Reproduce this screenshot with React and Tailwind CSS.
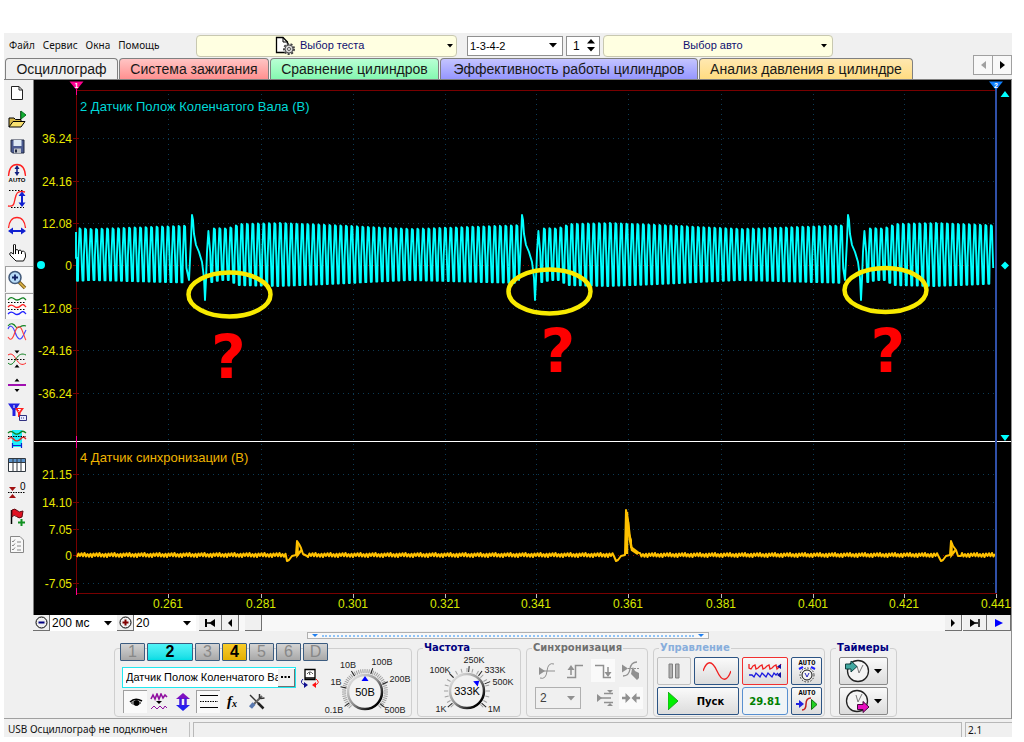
import React, { useState } from 'react';
import clsx from 'clsx';

const TABS = [
  { label: 'Осциллограф', cls: 'w-[113px] bg-[#f0f0f0] border-b-transparent' },
  { label: 'Система зажигания', cls: 'w-[150px] bg-linear-to-b from-[#ffc4c4] to-[#ff9090]' },
  { label: 'Сравнение цилиндров', cls: 'w-[169px] bg-linear-to-b from-[#b8ffd4] to-[#84f8b0]' },
  { label: 'Эффективность работы цилиндров', cls: 'w-[258px] bg-linear-to-b from-[#c4c4ff] to-[#9696ff]' },
  { label: 'Анализ давления в цилиндре', cls: 'w-[214px] bg-linear-to-b from-[#ffe8b0] to-[#ffdc80]' },
];

const CHANNELS = [
  { id: '1' },
  { id: '2', cls: 'w-[46px] bg-linear-to-b from-[#50f4f8] to-[#00dce4] text-black font-bold' },
  { id: '3' },
  { id: '4', cls: 'w-[25px] bg-linear-to-b from-[#f8cc28] to-[#e4b000] text-black font-bold' },
  { id: '5' },
  { id: '6' },
  { id: 'D' },
];

/* ---------- signals ---------- */

const GAPS = [192, 522, 848];
const GRID_X = [168, 261, 353, 445, 536, 628, 721, 813, 904, 996];
const TIMES = ['0.261', '0.281', '0.301', '0.321', '0.341', '0.361', '0.381', '0.401', '0.421', '0.441'];
const CH2_SCALE = [['36.24', 138], ['24.16', 181], ['12.08', 223], ['0', 265], ['-12.08', 308], ['-24.16', 350], ['-36.24', 393]];
const CH4_SCALE = [['21.15', 474], ['14.10', 502], ['7.05', 529], ['0', 555], ['-7.05', 583]];
const MARKS = [[229.5, 294.5, 228.5, 378], [549.5, 291.5, 558, 372], [885.5, 290, 888, 372]];

// [distance from the missing teeth, top, bottom]
const ENVELOPE = [[0, 231, 282], [5, 227, 282], [11, 229, 280], [22, 227, 280], [28, 224, 285], [70, 223, 286], [120, 225, 284], [200, 229, 280], [312, 225, 283]];

const envelope = u => {
  const i = Math.max(1, ENVELOPE.findIndex(p => p[0] >= u));
  const a = ENVELOPE[i - 1];
  const b = ENVELOPE[i];
  const k = Math.min(1, (u - a[0]) / (b[0] - a[0]));
  return [a[1] + (b[1] - a[1]) * k, a[2] + (b[2] - a[2]) * k];
};

const crankPath = () => {
  const pts = [[76, 232], [76, 258], [77, 258]];
  let x = 77;
  let last = -125;
  [...GAPS, 2000].forEach(gap => {
    while (x + 5.5 < gap - 1 && x < 992) {
      const [top, bottom] = envelope(Math.min(311, Math.max(0, x - last - 16)));
      pts.push([x, bottom], [x + 1, bottom], [x + 1.4, 256], [x + 2.6, top], [x + 3.6, top + 1], [x + 4.2, 248], [x + 4.9, 268]);
      x += 5.5;
    }
    if (gap < 2000) {
      pts.push([gap - 3, 280], [gap - 1, 240], [gap, 215], [gap + 1, 220], [gap + 2, 234], [gap + 4, 245], [gap + 7, 252],
        [gap + 10, 262], [gap + 12, 278], [gap + 13, 300], [gap + 14, 280], [gap + 15, 252]);
      last = gap;
      x = gap + 13.8;
      pts.push([x + 2.6, 231], [x + 4.4, 252]);
      x += 5.5;
    }
  });
  return pts.map(p => p.join(',')).join(' ');
};

const PULSES = [
  [287, [[287, 561], [289, 560], [292, 556], [296, 555], [297, 541], [299, 544], [301, 548], [303, 554], [307, 556]]],
  [616, [[616, 561], [618, 560], [621, 556], [625, 555], [626, 510], [628, 520], [629, 534], [631, 540], [631, 547], [635, 550], [639, 553]]],
  [941, [[941, 561], [943, 560], [946, 556], [950, 555], [951, 541], [953, 546], [956, 550], [958, 556], [961, 556]]],
];

const syncPath = () => {
  const pts = [];
  let x = 77;
  let n = 0;
  while (x < 996) {
    const pulse = PULSES.find(p => x >= p[0] - 1 && x < p[0] + 5);
    if (pulse) {
      pts.push(...pulse[1]);
      x = pulse[1][pulse[1].length - 1][0] + 1;
    }
    const d = ((n * 7) % 5) / 4;
    pts.push([x, n % 2 ? 553 + d : 557 - d]);
    x += 1.5;
    n += 1;
  }
  return pts.map(p => p.join(',')).join(' ');
};

function Scope() {
  return (
    <svg viewBox="34 80 977 535" className="block h-auto w-full bg-black font-['Liberation_Sans',Arial,sans-serif] text-[12px]" role="img" aria-label="Осциллограмма">
      <g stroke="#0c3a54" strokeWidth="1" strokeDasharray="1 4">
        {GRID_X.map(x => <line key={x} x1={x + 0.5} x2={x + 0.5} y1="94" y2="593" />)}
        {[...CH2_SCALE, ...CH4_SCALE].map(([t, y]) => (
          <line key={t + y} x1="78" x2="996" y1={y + 0.5} y2={y + 0.5} stroke={t === '0' ? '#8c0000' : '#0c3a54'} />
        ))}
      </g>
      <g stroke="#780000" strokeWidth="1">
        <path d="M76 90.5H997M76 593.5H997M76.5 90V594" fill="none" />
        {[...CH2_SCALE, ...CH4_SCALE].map(([t, y]) => <line key={t + y} x1="73" x2="79" y1={y + 0.5} y2={y + 0.5} />)}
      </g>
      {GRID_X.map(x => <path key={x} d={`M${x + 0.5} 594v4`} stroke="#c0c0c0" />)}
      <path d="M34 441.5H1011" stroke="#fff" />

      <polyline points={crankPath()} fill="none" stroke="#00ffff" strokeWidth="1.9" strokeLinejoin="round" />
      <polyline points={syncPath()} fill="none" stroke="#ffc000" strokeWidth="2" strokeLinejoin="round" />
      <path d="M627 512v42M628 522l2 18 2 10 6 4M297.500 543v12l4 -5M951.500 543v12l4 -5" fill="none" stroke="#ffc000" strokeWidth="2.500" />

      <path d="M996 84V593" stroke="#3050a8" strokeWidth="2" />
      <path d="M76.500 84V95M76.500 436V448M76.500 588V595" stroke="#ff0090" />
      <path d="M69.500 81.500H83.500L76.500 90Z" fill="#ff0090" />
      <path d="M989 81.500H1003L996 90Z" fill="#1080ff" />
      <text x="76.5" y="88" fontSize="7" fontWeight="bold" textAnchor="middle" fill="#fff">1</text>
      <text x="996" y="88" fontSize="7" fontWeight="bold" textAnchor="middle" fill="#fff">2</text>
      <g fill="#00ffff">
        <path d="M1000.500 97L1005 91L1009.500 97ZM1000.500 435H1009.500L1005 441ZM1001 265.500L1005 261.500L1009 265.500L1005 269.500Z" />
        <circle cx="41" cy="265" r="4" />
      </g>

      <text x="80" y="111" fontSize="13" fill="#00d8d8">2 Датчик Полож Коленчатого Вала (В)</text>
      <text x="80" y="462" fontSize="13" fill="#f0b400">4 Датчик синхронизации (В)</text>
      <g fill="#e8e800" textAnchor="end">
        {[...CH2_SCALE, ...CH4_SCALE].map(([t, y]) => <text key={t + y} x="72" y={y + 5}>{t}</text>)}
      </g>
      <g fill="#d8e800" textAnchor="middle">
        {TIMES.map((t, i) => <text key={t} x={GRID_X[i]} y="608">{t}</text>)}
      </g>

      {MARKS.map(([cx, cy, tx, ty]) => (
        <g key={cx}>
          <ellipse cx={cx} cy={cy} rx="41" ry="22" fill="none" stroke="#f8ea00" strokeWidth="4.5" />
          <text x={tx} y={ty} fontFamily="DejaVu Sans" fontWeight="bold" fontSize="60" textAnchor="middle" fill="#ff0000">?</text>
        </g>
      ))}
    </svg>
  );
}

/* ---------- icons ---------- */

function Icon({ w = 20, h = 20, children }) {
  return (
    <svg width={w} height={h} viewBox={`0 0 ${w} ${h}`} fill="none" stroke="#000" className="shrink-0" aria-hidden="true">
      {children}
    </svg>
  );
}

const Down = ({ color = '#000' }) => (
  <Icon w={8} h={5}><path d="M0 0H8L4 4.500Z" fill={color} stroke="none" /></Icon>
);

const TOOLS = [
  ['Новый', <Icon><path d="M4.500 3.500H12L15.500 7V16.500H4.500Z" fill="#fff" stroke="#222" /><path d="M12 3.500V7H15.500" stroke="#222" /></Icon>],
  ['Открыть', <Icon><path d="M2 17V8H7L8.500 9.500H14V12" fill="#d8b848" /><path d="M2 17L6 11.500H18L14 17Z" fill="#f8e070" /><path d="M13.500 9V1" stroke="#444" /><path d="M14 1L19 5L14 9Z" fill="#10b030" stroke="#087020" /></Icon>],
  ['Сохранить', <Icon><path d="M4 4H17V17H5.500L4 15.500Z" fill="#4a5a90" stroke="#202840" /><path d="M6.500 4H14.500V10H6.500Z" fill="#dce8f4" stroke="none" /><path d="M7 12.500H14V17H7Z" fill="#c0c4c8" stroke="none" /><path d="M8 13.500H10V16.500H8Z" fill="#202840" stroke="none" /></Icon>],
  ['Авто', <Icon><path d="M1.500 13C2 6 5 1.500 10 1.500S18 6 18.500 13" stroke="#ff2020" strokeWidth="1.3" /><path d="M10 4V11" stroke="#102080" strokeWidth="1.500" /><path d="M10 2L12.500 6H7.500ZM10 13L12.500 9H7.500Z" fill="#102080" stroke="none" /><text x="10" y="19" textAnchor="middle" fontSize="6" fontWeight="bold" fill="#000" stroke="none">AUTO</text></Icon>],
  ['Амплитуда', <Icon><path d="M2 1.500H17M4 18.500H17" strokeDasharray="1.500 1.500" /><path d="M1 17C7 18 7 15 8 10S10 1 18 3" stroke="#ff2020" strokeWidth="1.300" /><path d="M15 6V15" stroke="#1020d0" strokeWidth="2" /><path d="M15 2.500L18.500 7H11.500ZM15 18L18.500 13.500H11.500Z" fill="#1020d0" stroke="none" /></Icon>],
  ['Период', <Icon><path d="M1.500 12C2 6 5 1.500 10 1.500S18 6 18.500 12" stroke="#ff2020" strokeWidth="1.300" /><path d="M5 15H15" stroke="#1020d0" strokeWidth="2" /><path d="M1 15L6 11.500V18.500ZM19 15L14 11.500V18.500Z" fill="#1020d0" stroke="none" /></Icon>],
  ['Рука', <Icon><path d="M6.500 12V3Q7.500 1 8.500 3V8L10 7.500L11.500 8.500L13.500 8L14.500 9.500L16.500 9Q18.500 10 18.500 13V15L16.500 19H9L3 13Q2 11 4 10.500Z" fill="#fff" stroke="#111" /><path d="M11.500 8.500V12M14.500 9.500V12M8.500 8V12" /></Icon>],
  ['Масштаб', <Icon><path d="M12 12L18 18" stroke="#806020" strokeWidth="3.500" /><path d="M12.500 12.500L18 18" stroke="#e0b848" strokeWidth="1.500" /><circle cx="8" cy="7.500" r="6" fill="#b8dcf8" stroke="#405878" strokeWidth="1.500" /><path d="M5 7.500H11M8 4.500V10.500" stroke="#102060" strokeWidth="1.800" /></Icon>],
  ['Раздельно', <Icon><path d="M1 4C3 1 5 1 7.500 3S12 4 14 2.500S17 2 19 4" stroke="#108020" strokeWidth="1.300" /><path d="M1 11C3 8.500 5 8.500 7.500 10.500S12 11.500 14 9.500S17 9 19 11" stroke="#ff2020" strokeWidth="1.300" /><path d="M1 18C3 15.500 5 15.500 7.500 17.500S12 18.500 14 16.500S17 16 19 18" stroke="#2020ff" strokeWidth="1.300" /><path d="M1 6.500H19M1 13.500H19" strokeDasharray="1.500 1.500" /></Icon>],
  ['Вместе', <Icon><path d="M1 4C4 0 7 2 9 5S14 2 19 4" stroke="#108020" strokeWidth="1.100" /><path d="M1 7C3 2 6 4 8 10S13 20 16 14L19 8" stroke="#4040ff" strokeWidth="1.100" /><path d="M1 15C4 20 6 16 8 10S13 3 15 8S18 17 19 18" stroke="#ff4040" strokeWidth="1.100" /></Icon>],
  ['Центр', <Icon><path d="M1 6C4 4 6 5 9 10S15 17 19 14" stroke="#ff2020" /><path d="M1 14C4 17 6 15 9 10S15 4 19 6" stroke="#108020" /><path d="M1 10.500H19" strokeDasharray="1.500 1.500" /><path d="M7.500 1.500H12.500L10 4.500ZM7.500 18.500H12.500L10 15.500Z" fill="#000" stroke="none" /></Icon>],
  ['Сдвиг', <Icon><path d="M1 10H19" stroke="#a010b0" strokeWidth="2" /><path d="M7.500 6.500H12.500L10 3.500ZM7.500 14H12.500L10 17Z" fill="#000" stroke="none" /></Icon>],
  ['Маркеры', <Icon><path d="M1 1.500H13L8.500 8V14H5.500V8Z" fill="#2020e0" stroke="none" /><path d="M8 6H17L13.500 11V15H11V11Z" fill="#ff2020" stroke="none" /><path d="M7 3V6" stroke="#fff" /><path d="M11 7.500H13.500L11.500 10" stroke="#fff" /><path d="M12.500 13.500H19.500V18.500H12.500Z" fill="#e8ecff" stroke="#303080" /><path d="M14 16H18" stroke="#303080" strokeDasharray="1 1" /></Icon>],
  ['Выделение', <Icon><path d="M5 1H15V18H5Z" fill="#20f0f8" stroke="none" /><path d="M1 4C3 2 5 2 7 4S12 5 14 3S18 3 19 4" stroke="#108020" strokeWidth="1.300" /><path d="M1 7.500H19" strokeDasharray="1.500 1" /><path d="M1 10C3 8 5 8 7 10.500S12 12 14 9.500S18 9 19 10" stroke="#e02020" strokeWidth="1.300" /><path d="M6 16.500H14M5.500 14V19M14.500 14V19" stroke="#1020d0" strokeWidth="1.200" /></Icon>],
  ['Таблица', <Icon><path d="M1.500 3.500H18.500V16.500H1.500Z" fill="#fff" stroke="#303840" /><path d="M2 4H18V7H2Z" fill="#5890c8" stroke="none" /><path d="M1.500 7.500H18.500M6 4V16M10 4V16M14 4V16" stroke="#303840" /></Icon>],
  ['Ноль', <Icon><path d="M1 10.500H18" strokeDasharray="1.500 1" /><path d="M2 5H9L5.500 9ZM2 16H9L5.500 12Z" fill="#a01010" stroke="none" /><text x="13" y="8" fontSize="10" fill="#000" stroke="none">0</text></Icon>],
  ['Флаг', <Icon><path d="M4.500 2V16" strokeWidth="1.500" /><path d="M5 2Q8 0 10 2.500T16 3L15 9Q12 11 9.500 8.500T5 9Z" fill="#e01020" stroke="#600810" /><path d="M14.500 11V18M11 14.500H18" stroke="#109020" strokeWidth="2" /></Icon>],
  ['Отчёт', <Icon><path d="M3.500 1.500H13L16.500 5V17.500H3.500Z" fill="#f8f8f8" stroke="#888" /><path d="M5 6L6 7L8 4.500M5 10L6 11L8 8.500M5 14L6 15L8 12.500M10 7H14M10 11H14M10 15H14" stroke="#888" /></Icon>],
];

function Toolbar() {
  return (
    <div className="flex w-[30px] shrink-0 flex-col border-r border-[#808080]">
      <div className="flex h-[478px] flex-col items-center justify-between" role="toolbar">
        {TOOLS.map(([name, icon], i) => (
          <button
            key={name}
            aria-label={name}
            className={clsx('flex h-[26px] w-7 items-center justify-center pr-1', (i === 7 || i === 8) && 'border-t border-l border-[#a0a0a0] bg-[#fafafa]')}
          >
            {icon}
          </button>
        ))}
      </div>
    </div>
  );
}

/* ---------- header ---------- */

function Header() {
  const [order, setOrder] = useState('1-3-4-2');
  return (
    <header className="flex h-[25px] items-center text-[11px]">
      <nav className="flex w-[192px] shrink-0 gap-2 pl-[5px] font-['Noto_Sans',sans-serif] text-[10px] text-[#111]">
        <a href="#file">Файл</a>
        <a href="#service">Сервис</a>
        <a href="#windows">Окна</a>
        <a href="#help">Помощь</a>
      </nav>
      <button className="flex h-[22px] w-[261px] items-center rounded-[4px] border border-[#c8c8b0] bg-[#ffffe1] pr-[3px] pl-[78px] text-[#101070]">
        <Icon w={21}>
          <path d="M1.500 1.500H8L12.500 6V16.500H1.500Z" fill="#fff" strokeWidth="1.300" />
          <path d="M8 1.500V6H12.500" />
          <circle cx="14" cy="13" r="5" fill="#d0d0d0" stroke="#444" strokeWidth="2" strokeDasharray="2 1.500" />
          <circle cx="14" cy="13" r="4" fill="#d8d8d8" stroke="#555" />
          <circle cx="14" cy="13" r="1.500" fill="#fff" stroke="#555" />
        </Icon>
        <span className="ml-1 flex-1 text-left text-[11px]">Выбор теста</span>
        <Icon w={6} h={4}><path d="M0 0H6L3 3.500Z" fill="#000" stroke="none" /></Icon>
      </button>
      <label className="ml-[10px] flex h-5 w-24 items-center border border-[#909090] bg-white pr-[5px] pl-[2px]">
        <select value={order} onChange={e => setOrder(e.target.value)} aria-label="Порядок работы цилиндров" className="min-w-0 flex-1 appearance-none text-[11px] leading-4">
          <option>1-3-4-2</option>
          <option>1-2-4-3</option>
        </select>
        <Down />
      </label>
      <div className="ml-[3px] flex h-5 w-[34px] items-center border border-[#909090] bg-white pr-1">
        <input aria-label="Цилиндр" defaultValue="1" className="w-5 min-w-0 pl-[6px] text-[12px] leading-4" />
        <div className="flex flex-col gap-[3px]">
          <button aria-label="Больше" className="block"><Icon w={8} h={5}><path d="M0 4.500H8L4 0Z" fill="#000" stroke="none" /></Icon></button>
          <button aria-label="Меньше" className="block"><Down /></button>
        </div>
      </div>
      <button className="ml-[3px] flex h-[22px] w-[230px] items-center rounded-[4px] border border-[#c8c8b0] bg-[#ffffe1] pr-[5px] pl-[79px] text-[#101070]">
        <span className="flex-1 text-left text-[11px]">Выбор авто</span>
        <Icon w={6} h={4}><path d="M0 0H6L3 3.500Z" fill="#000" stroke="none" /></Icon>
      </button>
    </header>
  );
}

function Tabs() {
  return (
    <div className="flex h-[22px] items-end border-b border-[#808080] pl-[1px] text-[14px] text-[#181818]">
      {TABS.map(t => (
        <button key={t.label} className={clsx('mr-[1px] h-[21px] shrink-0 rounded-t-[4px] border border-b-0 border-[#808080] leading-5 whitespace-nowrap', t.cls)}>
          {t.label}
        </button>
      ))}
      <div className="mb-1 ml-auto flex h-5 border border-[#a0a0a0]">
        <button aria-label="Назад" className="flex w-[19px] items-center justify-center border-r border-[#a0a0a0] bg-[#f8f8f8]">
          <Icon w={5} h={8}><path d="M5 0V8L0 4Z" fill="#a0a0a0" stroke="none" /></Icon>
        </button>
        <button aria-label="Вперёд" className="flex w-[18px] items-center justify-center bg-[#f8f8f8]">
          <Icon w={5} h={8}><path d="M0 0V8L5 4Z" fill="#000" stroke="none" /></Icon>
        </button>
      </div>
    </div>
  );
}

/* ---------- time scale and scrolling ---------- */

function ScrollButton({ label, w = 'w-[17px]', children }) {
  return (
    <button aria-label={label} className={clsx('flex h-4 shrink-0 items-center justify-center border-r border-b border-[#707070] bg-[#f0f0f0]', w)}>
      {children}
    </button>
  );
}

function ScrollRow() {
  return (
    <div className="flex h-4 items-center bg-[#f8f8f8] text-[12px]">
      <div className="h-4 w-[29px] shrink-0 bg-[#f0f0f0]" />
      <ScrollButton label="Сжать"><Icon w={13} h={13}><circle cx="6.500" cy="6.500" r="5.500" /><path d="M3.500 6.500H9.500" stroke="#000080" strokeWidth="2" /></Icon></ScrollButton>
      <label className="flex h-4 w-[67px] shrink-0 items-center bg-white pr-[5px] pl-[2px]">
        <select aria-label="Развёртка" className="min-w-0 flex-1 appearance-none leading-4"><option>200 мс</option></select>
        <Down />
      </label>
      <ScrollButton label="Растянуть"><Icon w={13} h={13}><circle cx="6.500" cy="6.500" r="5.500" /><path d="M3.500 6.500H9.500M6.500 3.500V9.500" stroke="#800000" strokeWidth="2" /></Icon></ScrollButton>
      <label className="flex h-4 w-[62px] shrink-0 items-center bg-white pr-[5px] pl-[2px]">
        <select aria-label="Масштаб" className="min-w-0 flex-1 appearance-none leading-4"><option>20</option></select>
        <Down />
      </label>
      <div className="w-[3px] shrink-0" />
      <ScrollButton label="В начало" w="w-[23px]"><Icon w={11} h={8}><path d="M1 0V8" strokeWidth="2" /><path d="M2 4H5" strokeWidth="1.500" /><path d="M10 0V8L4 4Z" fill="#000" stroke="none" /></Icon></ScrollButton>
      <ScrollButton label="Влево"><Icon w={4} h={8}><path d="M4 0V8L0 4Z" fill="#000" stroke="none" /></Icon></ScrollButton>
      <div className="flex flex-1 pl-[6px]">
        <ScrollButton label="Позиция" />
      </div>
      <ScrollButton label="Вправо"><Icon w={4} h={8}><path d="M0 0V8L4 4Z" fill="#000" stroke="none" /></Icon></ScrollButton>
      <ScrollButton label="В конец" w="ml-[1px] w-6"><Icon w={11} h={8}><path d="M1 0V8L7 4Z" fill="#000" stroke="none" /><path d="M10 0V8" strokeWidth="1.500" /><path d="M6 4H9" strokeWidth="1.500" /></Icon></ScrollButton>
      <ScrollButton label="Воспроизвести" w="w-6"><Icon w={8} h={8}><path d="M0 0V8L8 4Z" fill="#0000ff" stroke="none" /></Icon></ScrollButton>
    </div>
  );
}

/* ---------- control panel ---------- */

function Knob({ w, h, cx, cy, value, labels, angle, ticks }) {
  const step = 270 / ticks;
  return (
    <svg width={w} height={h} viewBox={`0 0 ${w} ${h}`} className="shrink-0 text-[9px]" role="img" aria-label={value}>
      <defs>
        <linearGradient id={`rim${ticks}`} x1="0" y1="0" x2="1" y2="1">
          <stop offset="0" stopColor="#f4f4f4" />
          <stop offset="0.5" stopColor="#909090" />
          <stop offset="0.85" stopColor="#000" />
        </linearGradient>
      </defs>
      <g stroke="#a0a0a0">
        {Array.from({ length: ticks + 1 }, (_, i) => (
          <path key={i} d={`M${cx} ${cy - 19}v-4`} transform={`rotate(${-135 + i * step} ${cx} ${cy})`} />
        ))}
      </g>
      {labels.map(([t, x, y, a]) => (
        <g key={t}>
          <path d={`M${cx} ${cy - 19}v-6`} stroke="#222" transform={`rotate(${a} ${cx} ${cy})`} />
          <text x={x} y={y} textAnchor="middle" fill="#222">{t}</text>
        </g>
      ))}
      <circle cx={cx} cy={cy} r="17" fill="#f2f2f2" stroke={`url(#rim${ticks})`} strokeWidth="2.500" />
      <path d={`M${cx - 3.5} ${cy - 11}h7l-3.500 -5z`} fill="#0000ff" transform={`rotate(${angle} ${cx} ${cy})`} />
      <text x={cx} y={cy + 4} textAnchor="middle" fontSize="11" fill="#000">{value}</text>
    </svg>
  );
}

function Group({ title, color, className, children }) {
  return (
    <fieldset className={clsx('h-[75px] min-w-0 shrink-0 rounded-[4px] border border-[#cfcfcf]', className)}>
      <legend className={clsx("ml-[5px] px-[1px] font-['DejaVu_Sans',sans-serif] text-[10px] leading-3 font-bold whitespace-nowrap", color)}>{title}</legend>
      {children}
    </fieldset>
  );
}

function ChannelGroup() {
  const [name, setName] = useState('Датчик Полож Коленчатого Вала');
  return (
    <div className="mt-[6px] flex h-[69px] w-[298px] shrink-0 rounded-[4px] border border-[#cfcfcf] pl-[5px]">
      <div className="-mt-[6px] w-[202px] shrink-0">
        <div className="flex w-max gap-[2px]">
          {CHANNELS.map(c => (
            <button key={c.id} className={clsx('h-[18px] rounded-[1px] border border-[#3c5c80] text-[16px] leading-4', c.cls || 'w-[25px] bg-linear-to-b from-[#d4d4d4] to-[#a8a8a8] text-[#888]')}>
              {c.id}
            </button>
          ))}
        </div>
        <div className="mt-[6px] ml-[2px] flex h-[21px] items-center">
          <div className="flex h-[21px] w-[174px] items-center border border-[#20e8f0] bg-white">
            <input aria-label="Название канала" value={name} onChange={e => setName(e.target.value)} className="min-w-0 flex-1 pl-[3px] text-[11px]" />
            <button aria-label="Выбрать датчик" className="flex h-[18px] w-[17px] items-center justify-center border-r border-b border-[#707070] bg-[#f0f0f0]">
              <Icon w={10} h={2}><path d="M0 1H10" strokeWidth="2" strokeDasharray="2 1.500" /></Icon>
            </button>
          </div>
          <button aria-label="Инвертировать" className="ml-1">
            <Icon><path d="M5 1.500H15V11.500H5Z" fill="#fff" strokeWidth="1.300" /><path d="M7 6Q10 2 13 6M10 7L9 4" stroke="#555" /><path d="M5 10H15" strokeWidth="1.500" /><path d="M3 11Q-1 15 5 17" stroke="#101090" /><path d="M4 14L8 17L4 20Z" fill="#101090" stroke="none" /><path d="M16 11Q21 15 15 17" stroke="#ff1010" /><path d="M16 14L12 17L16 20Z" fill="#ff1010" stroke="none" /></Icon>
          </button>
        </div>
        <div className="mt-[2px] ml-[3px] flex">
          <button aria-label="Показать" className="flex h-[23px] w-6 items-center justify-center border-t border-l border-[#a0a0a0] bg-[#fafafa]">
            <Icon w={14} h={12}><path d="M1 6Q6 1 13 5" strokeWidth="1.500" /><path d="M2 7Q7 3 12 7Q7 11 2 7Z" fill="#999" stroke="#666" /><circle cx="7.500" cy="7" r="2.500" fill="#000" /></Icon>
          </button>
          <button aria-label="Фильтр" className="flex h-[23px] w-6 items-center justify-center">
            <Icon w={18} h={18}><path d="M1 6L3 2L5 6L7 1L9 6L11 1L13 5L15 2L17 4" stroke="#9010a0" strokeWidth="1.600" /><path d="M6 8H12L9 11Z" fill="#000" stroke="none" /><path d="M1 16L4 13L7 16L10 13L13 16L15 13L17 15" stroke="#9010a0" /></Icon>
          </button>
          <button aria-label="Сдвинуть" className="flex h-[23px] w-6 items-center justify-center">
            <Icon w={16} h={18}><path d="M8 0L15 6H1Z" fill="#8010c0" stroke="none" /><path d="M8 18L15 12H1Z" fill="#2020f0" stroke="none" /><path d="M5.500 5V13M10.500 5V13" stroke="#4018e0" strokeWidth="2.500" /></Icon>
          </button>
          <button aria-label="Уровни" className="ml-[1px] flex h-[23px] w-6 items-center justify-center border-t border-l border-[#a0a0a0] bg-[#fafafa]">
            <Icon w={18} h={16}><path d="M0 1.500H18M0 13.500H18" /><path d="M0 7.500H18" strokeDasharray="1.500 1" /></Icon>
          </button>
          <button aria-label="Функция" className="flex h-[23px] w-6 items-center justify-center font-['Liberation_Serif',serif] text-[15px] leading-none font-bold italic">
            f<span className="mt-1 text-[10px]">x</span>
          </button>
          <button aria-label="Настройки" className="flex h-[23px] w-6 items-center justify-center">
            <Icon w={17} h={17}><path d="M2 2L14 14" stroke="#333" strokeWidth="1.500" /><path d="M10 10L15.500 15.500" stroke="#222" strokeWidth="2.500" /><path d="M14 3L5 12" stroke="#666" strokeWidth="2" /><path d="M6 10.500L2.500 14.500" stroke="#5878b0" strokeWidth="4" /><path d="M11.500 1V4.500L13 5.500L16.500 5" stroke="#333" strokeWidth="1.500" /></Icon>
          </button>
        </div>
      </div>
      <div className="pt-[7px]">
        <Knob w={89} h={60} cx={43} cy={36} value="50В" ticks={48} angle={0}
          labels={[['0.1В', 12, 57, -125], ['1В', 14, 29, -78], ['10В', 26, 12, -33], ['100В', 60, 9, 18], ['200В', 78, 26, 66], ['500В', 73, 57, 128]]} />
      </div>
    </div>
  );
}

const PUSH = 'flex items-center justify-center rounded-[2px] border border-[#2c5484] bg-linear-to-b from-[#fafafa] to-[#dcdcdc]';

function SyncGroup() {
  return (
    <Group title="Синхронизация" color="text-[#707070]" className="w-[122px]">
      <div className="flex flex-col gap-[5px] pt-[5px] pl-2">
        <div className="flex gap-1">
          <button disabled aria-label="Уровень" className="flex h-[23px] w-6 items-center justify-center"><Icon w={18} h={18}><path d="M1 9H17M2 16Q8 18 9 9T16 2" stroke="#909090" /><path d="M1 5V13L7 9Z" fill="#909090" stroke="none" /></Icon></button>
          <button disabled aria-label="Фронт" className="flex h-[23px] w-6 items-center justify-center"><Icon w={18} h={18}><path d="M1 15.500H9.500V3.500H17M5 6V13" stroke="#909090" strokeWidth="1.500" /><path d="M1.500 8H8.500L5 3Z" fill="#909090" stroke="none" /></Icon></button>
          <button disabled aria-label="Спад" className="flex h-[23px] w-6 items-center justify-center bg-[#fafafa]"><Icon w={18} h={18}><path d="M1 3.500H9.500V15.500H17M14 5V11" stroke="#909090" strokeWidth="1.500" /><path d="M10.500 10H17.500L14 15Z" fill="#909090" stroke="none" /></Icon></button>
          <button disabled aria-label="Вручную" className="flex h-[23px] w-6 items-center justify-center"><Icon w={20}><path d="M1 7.500H19" stroke="#909090" strokeDasharray="2 1" /><path d="M2 15Q8 15 9 8T16 1" stroke="#909090" strokeWidth="1.300" /><path d="M1 3.500V11.500L7 7.500ZM11 8L12 6L14 10L18 12V17L16 19L10 13Z" fill="#909090" stroke="none" /></Icon></button>
        </div>
        <div className="flex items-center">
          <label className="flex h-[22px] w-[46px] items-center border border-[#b0b0b0] pr-[5px] pl-1">
            <select disabled aria-label="Канал синхронизации" className="min-w-0 flex-1 appearance-none text-[12px] text-[#404040] opacity-100"><option>2</option></select>
            <Down color="#909090" />
          </label>
          <button disabled aria-label="Окно" className="ml-3 flex h-[22px] w-6 items-center justify-center"><Icon w={18} h={16}><path d="M1 8H15M8 3.500H17M8 12.500H17" stroke="#909090" strokeWidth="1.500" /><path d="M1 4V12L6 8ZM11 0H17L14 3ZM11 16H17L14 13Z" fill="#909090" stroke="none" /></Icon></button>
          <button disabled aria-label="Сжать" className="ml-[2px] flex h-[22px] w-6 items-center justify-center bg-[#fafafa]"><Icon w={18} h={10}><path d="M0 5H5M18 5H13" stroke="#909090" strokeWidth="2.500" /><path d="M3.500 0V10L8.500 5ZM14.500 0V10L9.500 5Z" fill="#909090" stroke="none" /></Icon></button>
        </div>
      </div>
    </Group>
  );
}

const AutoText = () => <text x="12" y="7" textAnchor="middle" fontSize="7" fontWeight="bold" fontFamily="Liberation Mono" fill="#000" stroke="none">AUTO</text>;

function ControlGroup() {
  return (
    <Group title="Управление" color="text-[#88aedc]" className="w-[172px]">
      <div className="flex gap-[3px] pt-[3px] pl-[3px]">
        <div className="flex w-[82px] flex-col gap-[2px]">
          <div className="flex gap-[3px]">
            <button disabled aria-label="Пауза" className="flex h-7 w-[34px] items-center justify-center rounded-[2px] border border-[#c0c0c0]"><Icon w={12} h={16}><path d="M1 1H4.500V15H1ZM7.500 1H11V15H7.500Z" fill="#b0b0b0" stroke="#808080" /></Icon></button>
            <button aria-label="Синусоида" className={clsx(PUSH, 'h-7 w-[45px]')}><Icon w={28}><path d="M0 10C4 -1 9 -1 14 10S24 21 28 10" stroke="#f02020" strokeWidth="1.300" /></Icon></button>
          </div>
          <button className={clsx(PUSH, 'h-7 gap-[19px] pr-1 font-[\'DejaVu_Sans\',sans-serif] text-[10px] font-bold')}>
            <Icon w={10} h={18}><path d="M0 0V18L10 9Z" fill="#00f000" stroke="#20a020" /></Icon>
            Пуск
          </button>
        </div>
        <div className="flex w-[46px] flex-col gap-[2px]">
          <button aria-label="Сигналы" className="flex h-7 items-center justify-center rounded-[2px] border border-[#f03030] bg-linear-to-b from-[#fafafa] to-[#dcdcdc]">
            <Icon w={34}><path d="M1 3V7L3 8L5 5L7 4L8 8L10 7L12 5L14 4L15 8L17 7L19 5L21 4L22 8L24 7L26 5L28 4L29 8L31 6L33 3" stroke="#f02020" strokeWidth="1.300" /><path d="M1 14H4L6 16L8 12L10 14L12 16L14 12L16 14L18 16L20 12L22 14L24 16L26 12L28 14L30 12" stroke="#1818e0" strokeWidth="1.300" /><path d="M33 3V8L29 5.500ZM33 11V17L29 14Z" fill="#1010a0" stroke="none" /></Icon>
          </button>
          <button className="h-7 rounded-[3px] border border-[#5890d0] bg-[#f0f4f6] font-['DejaVu_Sans',sans-serif] text-[10px] font-bold text-[#008000]">29.81</button>
        </div>
        <div className="flex w-[31px] flex-col gap-[2px]">
          <button aria-label="Автонастройка" className={clsx(PUSH, 'h-7')}><Icon w={24} h={26}><AutoText /><path d="M4 11L8 9M20 11L16 9" stroke="#2020ff" strokeWidth="2" /><circle cx="12" cy="17" r="7" fill="none" stroke="#333" strokeDasharray="1.500 1.500" /><circle cx="12" cy="17" r="5" fill="#f4f4f4" stroke="#111" /><path d="M10 15L12 19L14 15" stroke="#2020c0" /></Icon></button>
          <button aria-label="Автосинхронизация" className={clsx(PUSH, 'h-7')}><Icon w={24} h={26}><AutoText /><path d="M7 22Q11 22 11 16T16 10" stroke="#c02020" strokeWidth="1.500" /><path d="M1 16H5" stroke="#2020e0" strokeWidth="2" /><path d="M4 12V20L9 16Z" fill="#2020e0" stroke="none" /><path d="M16.500 11.500V21.500L22 16.500Z" fill="#20d020" stroke="#107010" /></Icon></button>
        </div>
      </div>
    </Group>
  );
}

function TimerGroup() {
  return (
    <Group title="Таймеры" color="text-[#000080]" className="w-[67px]">
      <div className="flex flex-col gap-[2px] pt-[3px] pl-2">
        <button aria-label="Таймер запуска" className="flex h-7 w-[49px] items-center justify-center gap-1 rounded-[2px] border border-[#888] bg-linear-to-b from-[#fafafa] to-[#dcdcdc]">
          <Icon w={25} h={24}><circle cx="13" cy="12" r="10.500" fill="#f4f4f4" stroke="#222" strokeWidth="1.300" /><path d="M12 7L14 14L18 6" stroke="#777" /><path d="M0.500 5H6V2L12 7.500L6 13V10H0.500Z" fill="#40a8a0" stroke="#104040" /></Icon>
          <Down />
        </button>
        <button aria-label="Таймер остановки" className="flex h-7 w-[49px] items-center justify-center gap-1 rounded-[2px] border border-[#888] bg-linear-to-b from-[#fafafa] to-[#dcdcdc]">
          <Icon w={25} h={24}><circle cx="12" cy="12" r="10.500" fill="#f4f4f4" stroke="#222" strokeWidth="1.300" /><path d="M11 6L13 13L17 5" stroke="#777" /><path d="M12.500 15.500H18V12.500L24 18L18 23.500V20.500H12.500Z" fill="#e810c0" stroke="#400838" /></Icon>
          <Down />
        </button>
      </div>
    </Group>
  );
}

function ControlPanel() {
  return (
    <section>
      <div className="h-[11px] pt-[1px] pl-[303px]">
        <div className="flex h-[7px] w-[402px] items-center gap-1 border border-[#b0b0b0] bg-[#f8f8f8] px-1">
          <Icon w={6} h={3}><path d="M0 0H6L3 3Z" fill="#2080f0" stroke="none" /></Icon>
          <div className="flex-1 border-t-2 border-dotted border-[#90c4f8]" />
          <Icon w={6} h={3}><path d="M0 0H6L3 3Z" fill="#2080f0" stroke="none" /></Icon>
        </div>
      </div>
      <div className="flex gap-[5px] border-b border-[#a0a0a0] pb-[1px] pl-[110px]">
        <ChannelGroup />
        <Group title="Частота" color="text-[#000080]" className="w-[104px]">
          <Knob w={100} h={60} cx={49} cy={37} value="333K" ticks={18} angle={50}
            labels={[['1K', 23, 58, -130], ['100K', 22, 19, -45], ['250K', 56, 9, 5], ['333K', 77, 19, 37], ['500K', 85, 31, 68], ['1M', 76, 58, 130]]} />
        </Group>
        <SyncGroup />
        <ControlGroup />
        <TimerGroup />
      </div>
    </section>
  );
}

export default function App() {
  return (
    <div className="min-h-screen bg-white pt-[33px] pr-3 pb-[5px] pl-1 font-['Liberation_Sans',Arial,sans-serif] text-black">
      <main className="bg-[#f0f0f0]">
        <Header />
        <Tabs />
        <div className="border-r border-[#909090]">
          <div className="flex">
            <Toolbar />
            <div className="min-w-0 flex-1"><Scope /></div>
          </div>
          <ScrollRow />
          <ControlPanel />
        </div>
        <footer className="flex h-[18px] gap-[3px] pt-[3px] font-['Noto_Sans',sans-serif] text-[10px] leading-[15px] text-[#111]">
          <div className="w-[186px] border-r border-[#c0c0c0] pl-1 whitespace-nowrap">USB Осциллограф не подключен</div>
          <div className="flex-1 border-t border-r border-l border-[#b8b8b8]" />
          <div className="w-[47px] border-t border-l border-[#b8b8b8] pl-[2px]">2.1</div>
        </footer>
      </main>
    </div>
  );
}
